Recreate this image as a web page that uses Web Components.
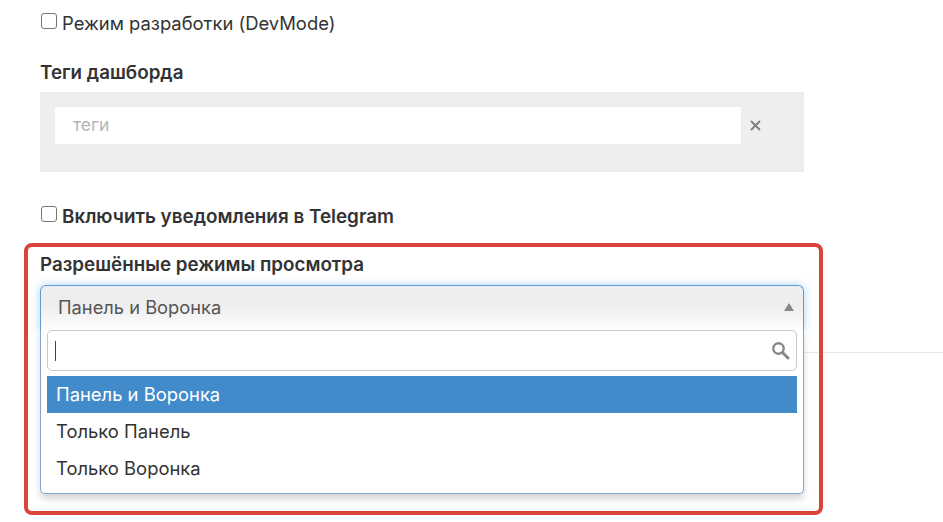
<!DOCTYPE html>
<html lang="ru"><head><meta charset="utf-8"><title>Настройки</title>
<style>
html,body{margin:0;padding:0;background:#fff;height:522px;overflow:hidden}
body{font-family:Inter,"Noto Sans",sans-serif;color:#333;position:relative}
</style></head><body>
<settings-form></settings-form>
<script>
function def(name,css,html){
  customElements.define(name,class extends HTMLElement{
    constructor(){super();const r=this.attachShadow({mode:'open'});r.innerHTML='<style>'+css+'</style>'+html;}
  });
}
def('check-row',`
:host{display:flex;align-items:center;gap:5px;font-size:18.4px;line-height:24px;color:#333}
:host([bold]){font-weight:600;font-size:18.85px}
.box{width:16px;height:16px;box-sizing:border-box;border:1.5px solid #767676;border-radius:3px;background:#fff;flex:none;position:relative;top:-2px;margin-left:1px}
:host([bold]) .box{top:-3px}
`,`<span class="box"></span><slot></slot>`);
def('field-label',`
:host{display:block;font-size:18.8px;line-height:24px;font-weight:600;color:#333}
`,`<slot></slot>`);
def('tags-input',`
:host{display:block;box-sizing:border-box;width:764px;height:80px;background:#eee;padding:15px}
.row{display:flex;align-items:center}
.inp{width:686px;height:37px;background:#fff;box-sizing:border-box;padding:0 18px;line-height:35px;color:#b5b5b5;font-size:17.5px;flex:none}
svg{margin-left:8px;flex:none}
`,`<div class="row"><div class="inp"><slot></slot></div><svg width="13" height="13" viewBox="0 0 13 13"><path d="M2 2L11 11M11 2L2 11" stroke="#7f7f7f" stroke-width="1.8" fill="none"/></svg></div>`);
def('select-box',`
:host{display:block;position:relative;width:764px;height:46px;font-size:18.3px;color:#555}
.head{box-sizing:border-box;width:764px;height:46px;border:1px solid #5b9dd9;border-bottom:0;border-radius:6px 6px 0 0;background:linear-gradient(#eee 0,#eee 45%,#fff 100%);box-shadow:0 0 8px rgba(82,168,236,.5);padding:0 17px;line-height:43px;display:flex;justify-content:space-between;align-items:flex-start}
.tri{width:0;height:0;border:5px solid transparent;border-top:0;border-bottom:8px solid #888;margin:17px -8px 0 0}
.drop{position:absolute;left:0;top:45px;width:764px;height:164px;box-sizing:border-box;background:#fff;border:1px solid #7ba7d2;border-top:0;border-radius:0 0 5px 5px;box-shadow:0 5px 6px rgba(0,0,0,.16);padding:0 6px;color:#333}
.search{box-sizing:border-box;height:41px;border:1px solid #c9c9c9;border-radius:5px;background:#fff;display:flex;align-items:center;justify-content:space-between;padding:0 6px 0 7px}
.caret{width:1px;height:20px;background:#444}
.list{margin-top:5px;display:block}
`,`<div class="drop"><div class="search"><span class="caret"></span><svg width="19" height="19" viewBox="0 0 19 19"><circle cx="7.5" cy="7.5" r="5.2" fill="none" stroke="#888" stroke-width="2.4"/><path d="M11.5 11.5L17 17" stroke="#888" stroke-width="3" stroke-linecap="round"/></svg></div><div class="list"><slot></slot></div></div>
<div class="head"><span><slot name="value"></slot></span><span class="tri"></span></div>`);
def('select-option',`
:host{display:block;height:37px;line-height:37px;padding:0 9px;font-size:18.4px;color:#333}
:host([active]){background:#428bca;color:#fff}
`,`<slot></slot>`);
def('annot-frame',`
:host{position:absolute;left:24px;top:243px;width:799px;height:272px;box-sizing:border-box;border:4.5px solid #d9433a;border-radius:8px;pointer-events:none}
`,``);
def('settings-form',`
:host{display:block;padding:11px 0 0 40px;position:relative;height:511px}
.c1{margin-bottom:26px}
.l1{margin-bottom:7px}
.c2{margin-top:33px}
.l2{margin-top:24px;margin-bottom:8px}
.rule{height:1px;background:#e8e8e8;margin:21px 0 0 0;width:903px}
`,`<check-row class="c1">Режим разработки (DevMode)</check-row>
<field-label class="l1">Теги дашборда</field-label>
<tags-input>теги</tags-input>
<check-row class="c2" bold>Включить уведомления в Telegram</check-row>
<field-label class="l2">Разрешённые режимы просмотра</field-label>
<select-box><span slot="value">Панель и Воронка</span>
<select-option active>Панель и Воронка</select-option>
<select-option>Только Панель</select-option>
<select-option>Только Воронка</select-option>
</select-box>
<div class="rule"></div>
<annot-frame></annot-frame>`);
</script>
</body></html>
